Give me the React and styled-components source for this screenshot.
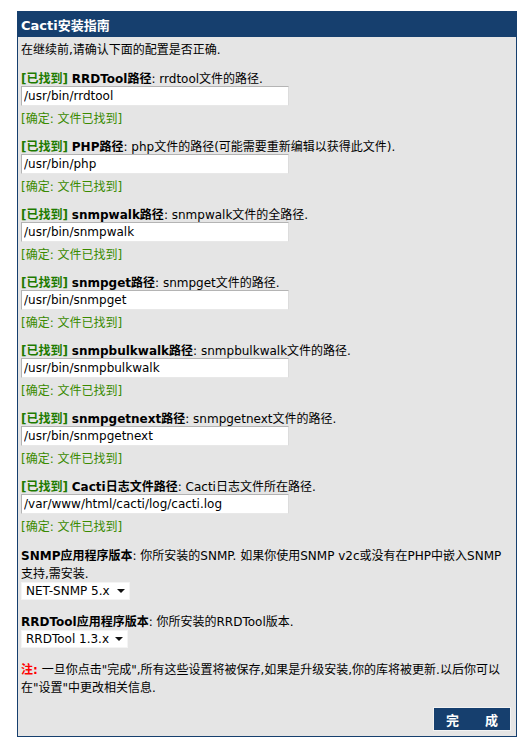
import styled, { createGlobalStyle } from 'styled-components';

const GlobalStyle = createGlobalStyle`
    body {
        margin: 0;
        background: #ffffff;
        font-family: "DejaVu Sans", "Noto Sans CJK SC", sans-serif;
        font-size: 12px;
        color: #000;
    }
`;

const paths = [
    { name: 'RRDTool路径', desc: 'rrdtool文件的路径.', value: '/usr/bin/rrdtool' },
    { name: 'PHP路径', desc: 'php文件的路径(可能需要重新编辑以获得此文件).', value: '/usr/bin/php' },
    { name: 'snmpwalk路径', desc: 'snmpwalk文件的全路径.', value: '/usr/bin/snmpwalk' },
    { name: 'snmpget路径', desc: 'snmpget文件的路径.', value: '/usr/bin/snmpget' },
    { name: 'snmpbulkwalk路径', desc: 'snmpbulkwalk文件的路径.', value: '/usr/bin/snmpbulkwalk' },
    { name: 'snmpgetnext路径', desc: 'snmpgetnext文件的路径.', value: '/usr/bin/snmpgetnext' },
    { name: 'Cacti日志文件路径', desc: 'Cacti日志文件所在路径.', value: '/var/www/html/cacti/log/cacti.log' },
];

export default function App() {
    return (
        <>
            <GlobalStyle />
            <Panel>
                <Header>Cacti安装指南</Header>
                <Body>
                    <Intro>在继续前,请确认下面的配置是否正确.</Intro>
                    {paths.map((p) => (
                        <Group key={p.name}>
                            <Line>
                                <Found>[已找到]</Found> <b>{p.name}</b>: {p.desc}
                            </Line>
                            <PathInput defaultValue={p.value} />
                            <Status>[确定: 文件已找到]</Status>
                        </Group>
                    ))}
                    <Section>
                        <Line>
                            <b>SNMP应用程序版本</b>: 你所安装的SNMP. 如果你使用SNMP v2c或没有在PHP中嵌入SNMP支持,需安装.
                        </Line>
                        <SelectWrap>
                            <Select $w={109} defaultValue="net-snmp">
                                <option value="net-snmp">NET-SNMP 5.x</option>
                            </Select>
                            <Caret />
                        </SelectWrap>
                    </Section>
                    <Section>
                        <Line>
                            <b>RRDTool应用程序版本</b>: 你所安装的RRDTool版本.
                        </Line>
                        <SelectWrap>
                            <Select $w={107} defaultValue="rrd13">
                                <option value="rrd13">RRDTool 1.3.x</option>
                            </Select>
                            <Caret />
                        </SelectWrap>
                    </Section>
                    <Section>
                        <Line>
                            <Note>注:</Note> 一旦你点击"完成",所有这些设置将被保存,如果是升级安装,你的库将被更新.以后你可以在"设置"中更改相关信息.
                        </Line>
                    </Section>
                    <Footer>
                        <FinishButton>完　　成</FinishButton>
                    </Footer>
                </Body>
            </Panel>
        </>
    );
}

const Panel = styled.div`
    margin: 11px 0 0 17px;
    width: 500px;
    box-sizing: border-box;
    border: 1px solid #163f6e;
    background: #e5e5e5;
`;

const Header = styled.div`
    background: #163f6e;
    color: #ffffff;
    font-weight: bold;
    font-size: 13px;
    height: 25px;
    line-height: 27px;
    overflow: hidden;
    padding-left: 3px;
`;

const Body = styled.div`
    padding: 2px 3px 5px;
`;

/* text sits a little lower in its line than the box it takes up */
const Intro = styled.div`
    line-height: 18px;
    padding-top: 2px;
    margin-bottom: -1px;
`;

const Group = styled.div`
    margin-top: 10px;
`;

const Line = styled.div`
    line-height: 18px;
    padding-top: 2px;
    margin-bottom: -2px;
`;

const Found = styled.b`
    color: #1e7b00;
`;

const PathInput = styled.input`
    display: block;
    position: relative;
    box-sizing: border-box;
    width: 268px;
    height: 20px;
    margin: 0;
    padding: 0 2px;
    font-family: inherit;
    font-size: 12px;
    color: #000;
    background: #ffffff;
    border: 1px solid;
    border-color: #b4b4b4 #dcdcdc #e8e8e8 #b4b4b4;
    outline: none;
`;

const Status = styled.div`
    margin-top: 2px;
    padding-top: 2px;
    margin-bottom: -2px;
    line-height: 18px;
    color: #3a8a00;
`;

const Section = styled.div`
    margin-top: 11px;
`;

const SelectWrap = styled.div`
    position: relative;
    display: inline-block;
    margin-top: 1px;
    vertical-align: top;
`;

const Select = styled.select`
    appearance: none;
    display: block;
    box-sizing: border-box;
    width: ${(p) => p.$w}px;
    height: 18px;
    margin: 0;
    padding: 0 0 0 4px;
    font-family: inherit;
    font-size: 12px;
    color: #000;
    background: #ffffff;
    border: 1px solid #f4f4f4;
    border-radius: 0;
    outline: none;
`;

const Caret = styled.span`
    position: absolute;
    right: 5px;
    top: 7px;
    width: 0;
    height: 0;
    border-left: 4px solid transparent;
    border-right: 4px solid transparent;
    border-top: 4px solid #111;
    pointer-events: none;
`;

const Note = styled.b`
    color: #ff0000;
`;

const Footer = styled.div`
    display: flex;
    justify-content: flex-end;
    margin-top: 12px;
    padding-right: 2px;
`;

const FinishButton = styled.button`
    width: 78px;
    height: 24px;
    box-sizing: border-box;
    padding: 0;
    background: #163f6e;
    color: #ffffff;
    font-family: "DejaVu Sans", "Noto Sans CJK SC", sans-serif;
    font-size: 13px;
    font-weight: bold;
    border: 1px solid #f2f2f2;
    cursor: pointer;
`;
